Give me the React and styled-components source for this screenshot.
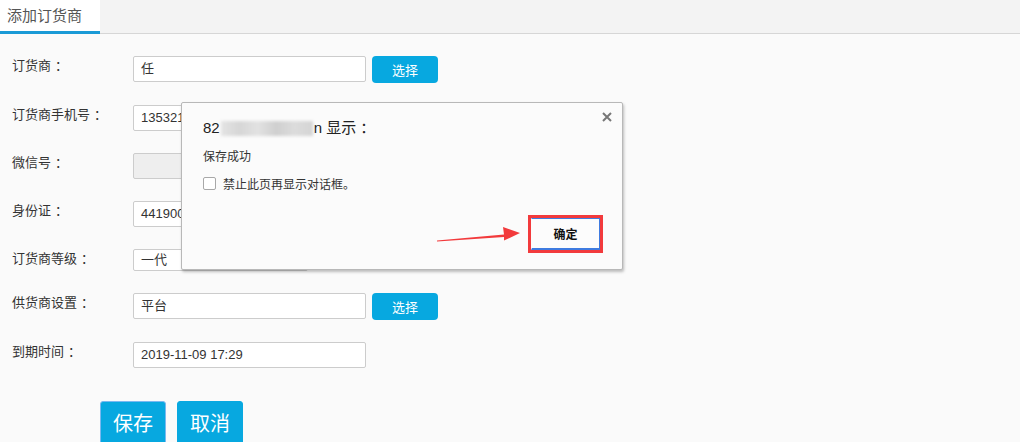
import React from "react";
import styled, { createGlobalStyle } from "styled-components";

const FONT = `"Liberation Sans", "Noto Sans CJK SC", sans-serif`;
const BLUE = "#07a8e0";

const GlobalStyle = createGlobalStyle`
  html, body {
    margin: 0;
    padding: 0;
    background: #fafafa;
    font-family: ${FONT};
  }
`;

const Page = styled.div`
  position: relative;
  width: 1020px;
  height: 442px;
  overflow: hidden;
  background: #fafafa;
`;

const TabBar = styled.div`
  display: flex;
  height: 33px;
  background: #f3f3f3;
  border-bottom: 1px solid #d6d6d6;
`;

const Tab = styled.div`
  width: 93px;
  padding-left: 7px;
  line-height: 31px;
  font-size: 15px;
  color: #555;
  background: ${({ active }) => (active ? "#fff" : "transparent")};
  border-bottom: 3px solid ${({ active }) => (active ? "#1a9ad6" : "transparent")};
  margin-bottom: -1px;
`;

const Form = styled.div`
  display: flex;
  flex-direction: column;
  padding-top: 22px;
`;

const Row = styled.div`
  display: flex;
  align-items: flex-start;
  height: ${({ h }) => h}px;
`;

const Label = styled.div`
  box-sizing: border-box;
  width: 133px;
  padding-left: 12px;
  font-size: 13px;
  line-height: 20px;
  color: #333;
`;

const Colon = styled.span`
  margin-left: 4px;
`;

const Input = styled.div`
  box-sizing: border-box;
  width: ${({ w }) => w || 233}px;
  height: ${({ ht }) => ht || 26}px;
  padding-left: 7px;
  border: 1px solid #cccccc;
  border-radius: 2px;
  background: ${({ disabled }) => (disabled ? "#eeeeee" : "#fff")};
  font-size: 13px;
  line-height: ${({ ht }) => (ht || 26) - 2}px;
  color: #333;
`;

const PickButton = styled.button`
  width: 66px;
  height: 27px;
  margin-left: 6px;
  border: none;
  border-radius: 4px;
  background: ${BLUE};
  color: #fff;
  font-family: ${FONT};
  font-size: 13px;
  padding: 0;
`;

const Actions = styled.div`
  display: flex;
  gap: 11px;
  padding-left: 100px;
  margin-top: 10px;
`;

const BigButton = styled.button`
  box-sizing: border-box;
  width: 66px;
  height: 46px;
  border: 1px solid ${({ focused }) => (focused ? "#7ab8f0" : BLUE)};
  border-radius: 3px 3px 0 0;
  background: ${BLUE};
  color: #fff;
  font-family: ${FONT};
  font-size: 20px;
  padding: 0 0 4px;
`;

const Dialog = styled.div`
  position: absolute;
  left: 181px;
  top: 102px;
  box-sizing: border-box;
  width: 442px;
  height: 168px;
  padding: 14px 19px 16px 21px;
  display: flex;
  flex-direction: column;
  background: #fbfbfb;
  border: 1px solid #b8b8b8;
  border-radius: 2px;
  box-shadow: 1px 2px 3px rgba(0, 0, 0, 0.25);
`;

const Close = styled.div`
  position: absolute;
  right: 10px;
  top: 9px;
  width: 10px;
  height: 10px;
  display: flex;
`;

const Title = styled.div`
  font-size: 15px;
  line-height: 22px;
  color: #222;
  display: flex;
  align-items: center;
`;

const Blur = styled.span`
  display: inline-block;
  width: 92px;
  height: 15px;
  margin: 0 1px;
  background: linear-gradient(
    90deg,
    #e4e4e4 0%,
    #d6d6d6 20%,
    #e2e2e2 40%,
    #cfcfcf 60%,
    #dcdcdc 80%,
    #d4d4d4 100%
  );
  filter: blur(1.5px);
`;

const Message = styled.div`
  margin-top: 10px;
  font-size: 12px;
  line-height: 16px;
  color: #333;
`;

const CheckRow = styled.div`
  display: flex;
  align-items: center;
  gap: 7px;
  margin-top: 10px;
  font-size: 12px;
  color: #333;
`;

const Box = styled.span`
  box-sizing: border-box;
  width: 13px;
  height: 13px;
  border: 1px solid #a8a8a8;
  border-radius: 2px;
  background: #fff;
`;

const Footer = styled.div`
  margin-top: auto;
  display: flex;
  justify-content: flex-end;
`;

const RedFrame = styled.div`
  border: 3px solid #f23a3c;
  display: flex;
`;

const OkButton = styled.button`
  box-sizing: border-box;
  width: 69px;
  height: 32px;
  background: #fcfcfc;
  border: 1px solid #3f7be0;
  border-left-color: #fcfcfc;
  border-bottom-width: 2px;
  font-family: ${FONT};
  font-size: 12px;
  font-weight: bold;
  color: #111;
  padding: 0;
`;

const Arrow = styled.svg`
  position: absolute;
  left: 430px;
  top: 220px;
`;

const rows = [
  { label: "订货商", value: "任", pick: true, h: 49 },
  { label: "订货商手机号", value: "135321", h: 48 },
  { label: "微信号", value: "", disabled: true, h: 48 },
  { label: "身份证", value: "441900", h: 48 },
  { label: "订货商等级", value: "一代", w: 175, ht: 22, h: 44 },
  { label: "供货商设置", value: "平台", pick: true, h: 49 },
  { label: "到期时间", value: "2019-11-09 17:29", h: 49 },
];

export default function App() {
  return (
    <Page>
      <GlobalStyle />
      <TabBar>
        <Tab active>添加订货商</Tab>
      </TabBar>
      <Form>
        {rows.map((r) => (
          <Row key={r.label} h={r.h}>
            <Label>
              {r.label}
              <Colon>：</Colon>
            </Label>
            <Input w={r.w} ht={r.ht} disabled={r.disabled}>
              {r.value}
            </Input>
            {r.pick && <PickButton>选择</PickButton>}
          </Row>
        ))}
        <Actions>
          <BigButton focused>保存</BigButton>
          <BigButton>取消</BigButton>
        </Actions>
      </Form>

      <Dialog>
        <Close>
          <svg width="10" height="10" viewBox="0 0 10 10">
            <path d="M1 1 L9 9 M9 1 L1 9" stroke="#777" strokeWidth="2" />
          </svg>
        </Close>
        <Title>
          82<Blur />n 显示<Colon>：</Colon>
        </Title>
        <Message>保存成功</Message>
        <CheckRow>
          <Box />
          禁止此页再显示对话框。
        </CheckRow>
        <Footer>
          <RedFrame>
            <OkButton>确定</OkButton>
          </RedFrame>
        </Footer>
      </Dialog>

      <Arrow width="95" height="30" viewBox="0 0 95 30">
        <polygon
          points="7,20.5 74,14.5 73,7 90,13 74,20.5 74,17 7,21.5"
          fill="#f23a3c"
        />
      </Arrow>
    </Page>
  );
}
